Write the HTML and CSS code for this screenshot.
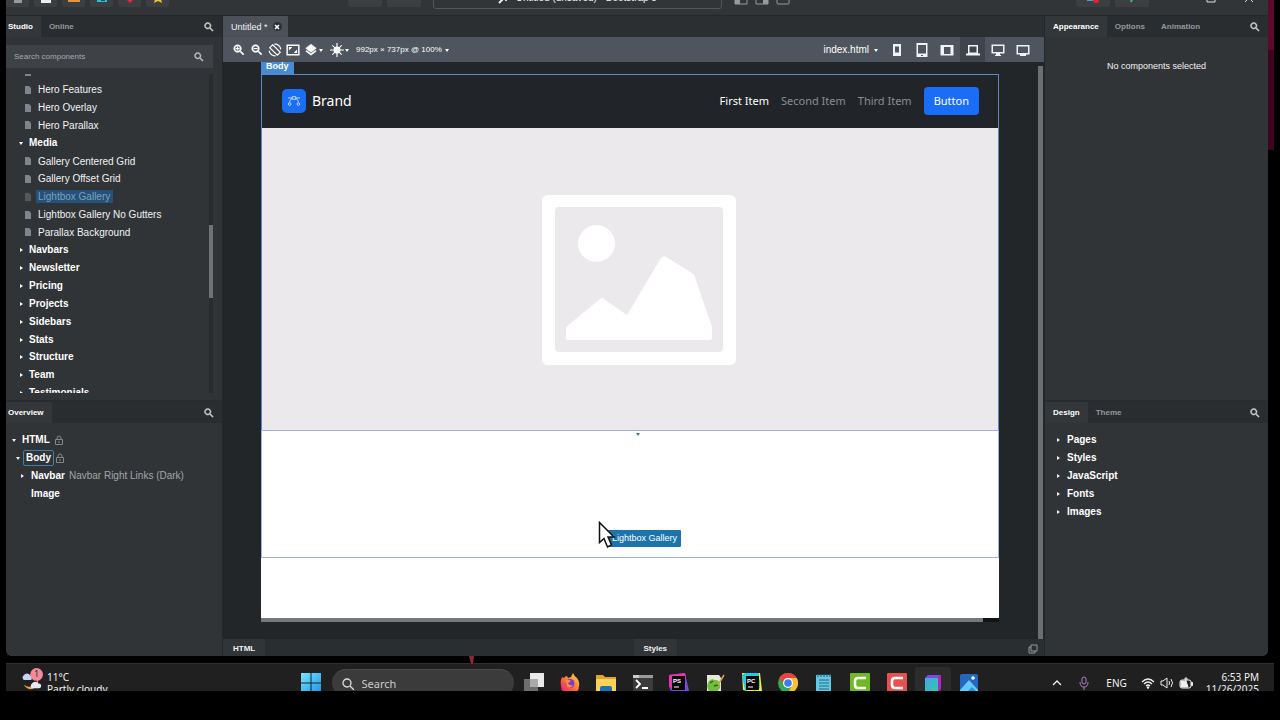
FILE: index.html
```html
<!DOCTYPE html>
<html lang="en">
<head>
<meta charset="utf-8">
<title>Untitled - Bootstrap Studio</title>
<link rel="stylesheet" href="styles.css">
</head>
<body>
<svg class="defs" aria-hidden="true">
  <symbol id="search" viewBox="0 0 24 24"><path d="M15.5 14h-.79l-.28-.27C15.41 12.59 16 11.11 16 9.5 16 5.91 13.09 3 9.5 3S3 5.91 3 9.5 5.91 16 9.5 16c1.61 0 3.09-.59 4.23-1.57l.27.28v.79l5 4.99L20.49 19l-4.99-5zm-6 0C7.01 14 5 11.99 5 9.5S7.01 5 9.5 5 14 7.01 14 9.5 11.99 14 9.5 14z" stroke="currentColor"/></symbol>
  <symbol id="file" viewBox="0 0 8 10"><path d="M1 1h4l2 2v6H1z"/></symbol>
  <symbol id="right" viewBox="0 0 6 6"><path d="M2 1l3 2-3 2z"/></symbol>
  <symbol id="down" viewBox="0 0 6 6"><path d="M1 2h4L3 5z"/></symbol>
  <symbol id="lock" viewBox="0 0 10 10"><path d="M1.5 4.5h7v5h-7zM3 4.500V3a2 2 0 0 1 4 0v1.500M5 6v2" fill="none" stroke="currentColor"/></symbol>
</svg>

<div class="desktop">
  <div class="screen">
    <div class="window">
      <header class="topbar">
        <div class="tools">
          <button class="tool" aria-label="Menu"><svg viewBox="0 0 12 12"><path d="M2 9h8v3H2z" fill="#999"/></svg></button>
          <button class="tool" aria-label="New"><svg viewBox="0 0 12 12"><path d="M1 1h10v11H1z" fill="#eee"/></svg></button>
          <button class="tool" aria-label="Open"><svg viewBox="0 0 12 12"><path d="M0 3h12v8H0z" fill="#e2953a"/></svg></button>
          <button class="tool" aria-label="Save"><svg viewBox="0 0 12 12"><path d="M1 1h10v10H1z" fill="#38b6d8"/><path d="M5 8h4v2H5z" fill="#24505e"/></svg></button>
          <button class="tool" aria-label="Favorite"><svg viewBox="0 0 12 12"><path d="M1 3h10v4l-5 5-5-5z" fill="#e0293f"/></svg></button>
          <button class="tool" aria-label="Rate"><svg viewBox="0 0 12 12"><path d="M6 0l2 4 4 1-3 3 1 4-4-2-4 2 1-4-3-3 4-1z" fill="#f0c22e"/></svg></button>
        </div>
        <span class="space-left"></span>
        <div class="history"><button class="tool" aria-label="Undo"></button><button class="tool" aria-label="Redo"></button></div>
        <div class="title"><svg viewBox="0 0 12 12"><path d="M1 11l4-4M5 5l3 3 3-5-2-2z" stroke="#eee" stroke-width="2" fill="#eee"/></svg>Untitled (unsaved) - Bootstrap 5</div>
        <div class="layouts">
          <svg viewBox="0 0 14 14"><path d="M1 1h12v12H1z" fill="none" stroke="#999"/><path d="M1 1h5v12H1z" fill="#999"/></svg>
          <svg viewBox="0 0 14 14"><path d="M1 1h12v12H1z" fill="none" stroke="#999"/><path d="M8 1h5v12H8z" fill="#999"/></svg>
          <svg viewBox="0 0 14 14"><rect x="1" y="1" width="12" height="12" rx="1" fill="none" stroke="#999"/></svg>
        </div>
        <span class="space-right"></span>
        <div class="history">
          <button class="tool" aria-label="Preview"><svg viewBox="0 0 12 12"><path d="M0 1h9v9H0z" fill="#38a6d8"/><circle cx="9" cy="9" r="3" fill="#e8202f"/></svg></button>
          <button class="tool" aria-label="Export"><svg viewBox="0 0 12 12"><path d="M8 0L4 6h3l-2 5" stroke="#2fc56a" stroke-width="2" fill="none"/></svg></button>
        </div>
        <div class="winctl">
          <svg viewBox="0 0 10 10"><path d="M0 5h8" stroke="#ddd"/></svg>
          <svg viewBox="0 0 10 10"><path d="M1 1h8v8H1z" stroke="#ddd" fill="none"/></svg>
          <svg viewBox="0 0 10 10"><path d="M1 1l8 8M9 1L1 9" stroke="#ddd"/></svg>
        </div>
      </header>

      <div class="workspace">
        <aside class="side left">
          <section class="panel components">
            <div class="tabs"><button class="tab on">Studio</button><button class="tab">Online</button><button class="find" aria-label="Search"><svg><use href="#search"/></svg></button></div>
            <label class="searchbox"><input type="text" placeholder="Search components" aria-label="Search components"><svg><use href="#search"/></svg></label>
            <div class="scrollarea">
              <div class="clip">
                <ul class="tree">
                  <li class="leaf"><svg><use href="#file"/></svg></li>
                  <li class="leaf"><svg><use href="#file"/></svg><span>Hero Features</span></li>
                  <li class="leaf"><svg><use href="#file"/></svg><span>Hero Overlay</span></li>
                  <li class="leaf"><svg><use href="#file"/></svg><span>Hero Parallax</span></li>
                  <li class="group"><svg><use href="#down"/></svg>Media</li>
                  <li class="leaf"><svg><use href="#file"/></svg><span>Gallery Centered Grid</span></li>
                  <li class="leaf"><svg><use href="#file"/></svg><span>Gallery Offset Grid</span></li>
                  <li class="leaf picked"><svg><use href="#file"/></svg><span>Lightbox Gallery</span></li>
                  <li class="leaf"><svg><use href="#file"/></svg><span>Lightbox Gallery No Gutters</span></li>
                  <li class="leaf"><svg><use href="#file"/></svg><span>Parallax Background</span></li>
                  <li class="group"><svg><use href="#right"/></svg>Navbars</li>
                  <li class="group"><svg><use href="#right"/></svg>Newsletter</li>
                  <li class="group"><svg><use href="#right"/></svg>Pricing</li>
                  <li class="group"><svg><use href="#right"/></svg>Projects</li>
                  <li class="group"><svg><use href="#right"/></svg>Sidebars</li>
                  <li class="group"><svg><use href="#right"/></svg>Stats</li>
                  <li class="group"><svg><use href="#right"/></svg>Structure</li>
                  <li class="group"><svg><use href="#right"/></svg>Team</li>
                  <li class="group"><svg><use href="#right"/></svg>Testimonials</li>
                </ul>
              </div>
              <div class="track"><div class="thumb"></div></div>
            </div>
          </section>
          <section class="panel overview">
            <div class="tabs"><button class="tab on">Overview</button><button class="find" aria-label="Search"><svg><use href="#search"/></svg></button></div>
            <ul class="outline">
              <li class="d0"><svg class="caret"><use href="#down"/></svg><b>HTML</b><svg class="lock"><use href="#lock"/></svg></li>
              <li class="d1"><svg class="caret"><use href="#down"/></svg><b class="boxed">Body</b><svg class="lock"><use href="#lock"/></svg></li>
              <li class="d2"><svg class="caret"><use href="#right"/></svg><b>Navbar</b><span>Navbar Right Links (Dark)</span></li>
              <li class="d2"><svg class="caret"></svg><b>Image</b></li>
            </ul>
          </section>
        </aside>

        <main class="center">
          <div class="doctabs"><div class="doctab">Untitled *<button aria-label="Close tab"><svg viewBox="0 0 8 8"><path d="M2 2l4 4M6 2L2 6" stroke="#fff" stroke-width="1.500"/></svg></button></div></div>
          <div class="toolbar">
            <button aria-label="Zoom in"><svg viewBox="0 0 24 24"><use href="#search"/><path d="M9.500 6v7M6 9.500h7" stroke="currentColor" stroke-width="2"/></svg></button>
            <button aria-label="Zoom out"><svg viewBox="0 0 24 24"><use href="#search"/><path d="M6 9.500h7" stroke="currentColor" stroke-width="2"/></svg></button>
            <button aria-label="Rotate"><svg viewBox="0 0 24 24"><g fill="none" stroke="currentColor" stroke-width="2"><path d="M8 3l13 13-5 5L3 8zM11 2a10 10 0 0 1 11 9M13 22A10 10 0 0 1 2 13"/></g></svg></button>
            <button aria-label="Fit"><svg viewBox="0 0 24 24"><path d="M2 4h20v16H2z" fill="none" stroke="currentColor" stroke-width="2.500"/><path d="M19 11v6h-6zM5 13V7h6z"/></svg></button>
            <button aria-label="Layers"><svg viewBox="0 0 24 24"><path d="M11.990 18.540l-7.370-5.730L3 14.070l9 7 9-7-1.630-1.270-7.380 5.740zM12 16l7.360-5.730L21 9l-9-7-9 7 1.630 1.270L12 16z" stroke="currentColor"/></svg><svg class="caret"><use href="#down"/></svg></button>
            <button class="sun" aria-label="Brightness"><svg viewBox="0 0 24 24"><circle cx="12" cy="12" r="6"/><path d="M12 0v24M0 12h24M4 4l16 16M20 4L4 20" stroke="currentColor" stroke-width="2"/></svg><svg class="caret"><use href="#down"/></svg></button>
            <button class="size">992px × 737px @ 100%<svg class="caret"><use href="#down"/></svg></button>
            <button class="page">index.html<svg class="caret"><use href="#down"/></svg></button>
            <div class="devices">
              <button aria-label="Phone"><svg viewBox="0 0 14 14"><path d="M3 1h8v12H3z"/><path class="hole" d="M5 3.500h4v6H5z"/></svg></button>
              <button aria-label="Tablet"><svg viewBox="0 0 14 14"><path d="M1.500 0h11v14h-11z"/><path class="hole" d="M3 2h8v8.500H3zM6 12h2v1H6z"/></svg></button>
              <button aria-label="Tablet landscape"><svg viewBox="0 0 14 14"><path d="M.5 2h13v10.500H.5z"/><path class="hole" d="M4 4h6.500v7H4z"/></svg></button>
              <button class="on" aria-label="Laptop"><svg viewBox="0 0 14 14"><path d="M2 2h10v8.500h2v2H0v-2h2z"/><path class="hole" d="M3.500 3.500h7v6h-7z"/></svg></button>
              <button aria-label="Desktop"><svg viewBox="0 0 14 14"><path d="M.5 1.500h13v9H9V12h1v1H4v-1h1v-1.500H.5z"/><path class="hole" d="M2 3h10v6H2z"/></svg></button>
              <button aria-label="Large desktop"><svg viewBox="0 0 14 14"><path d="M.5 2h13v9.500H10V13H4v-1.500H.5z"/><path class="hole" d="M2 3.500h10V10H2z"/></svg></button>
            </div>
          </div>

          <div class="canvas">
            <div class="artboard">
              <div class="tagrow"><span class="tag">Body</span></div>
              <div class="selected">
                <nav class="navbar">
                  <span class="logo"><svg viewBox="0 0 16 16"><g fill="none" stroke="#cfe2ff"><path d="M1 4.500h5M10 4.500h5M6 3h4v3H6zM6 5C4 6 3 8 3 10M10 5c2 1 3 3 3 5"/><circle cx="3" cy="11.500" r="1.500"/><circle cx="13" cy="11.500" r="1.500"/></g></svg></span>
                  <span class="brand">Brand</span>
                  <a class="active" href="#">First Item</a><a href="#">Second Item</a><a href="#">Third Item</a>
                  <button>Button</button>
                </nav>
                <div class="image">
                  <svg viewBox="0 0 194 170" role="img" aria-label="Image placeholder"><path fill="#fff" fill-rule="evenodd" d="M6 0h182q6 0 6 6v158q0 6-6 6H6q-6 0-6-6V6q0-6 6-6zM17 12q-4 0-4 4v137q0 4 4 4h160q4 0 4-4V16q0-4-4-4z"/><circle cx="54.500" cy="48.500" r="18.500" fill="#fff"/><path fill="#fff" d="M24 132l34-28q2-2 4 0l23 16 34-57q2-3 5-1l26 16q2 1 3 4l17 50v11q0 2-2 2H26q-2 0-2-2z"/></svg>
                </div>
                <div class="dropzone">
                  <svg class="marker"><use href="#down"/></svg>
                  <span class="drag">Lightbox Gallery</span>
                  <svg class="cursor" viewBox="0 0 18 28"><path d="M1.500 1.500v20l4.500-4 3.500 8.500 4-2-3.500-8h6z" fill="#fff" stroke="#111" stroke-width="1.500"/></svg>
                </div>
              </div>
              <div class="blank"></div>
              <div class="hscroll"><div></div></div>
            </div>
            <div class="vscroll"></div>
          </div>
          <div class="bottombar">
            <div><button>HTML</button></div>
            <div><button>Styles</button><button class="pop" aria-label="Detach"><svg viewBox="0 0 10 10"><path d="M3 1h6v6H3zM3 3H1v6h6V7" fill="none" stroke="#999"/></svg></button></div>
          </div>
        </main>

        <aside class="side right">
          <section class="panel appearance">
            <div class="tabs"><button class="tab on">Appearance</button><button class="tab">Options</button><button class="tab">Animation</button><button class="find" aria-label="Search"><svg><use href="#search"/></svg></button></div>
            <p>No components selected</p>
          </section>
          <section class="panel design">
            <div class="tabs"><button class="tab on">Design</button><button class="tab">Theme</button><button class="find" aria-label="Search"><svg><use href="#search"/></svg></button></div>
            <ul class="outline">
              <li><svg class="caret"><use href="#right"/></svg><b>Pages</b></li>
              <li><svg class="caret"><use href="#right"/></svg><b>Styles</b></li>
              <li><svg class="caret"><use href="#right"/></svg><b>JavaScript</b></li>
              <li><svg class="caret"><use href="#right"/></svg><b>Fonts</b></li>
              <li><svg class="caret"><use href="#right"/></svg><b>Images</b></li>
            </ul>
          </section>
        </aside>
      </div>
    </div>
    <div class="wallpaper"></div>
    <svg class="speck" viewBox="0 0 6 8"><path d="M0 0h5L4 8H2z" fill="#8c2740"/></svg>
  </div>

  <footer class="taskbar">
    <div class="taskrow">
      <div class="weather">
        <svg viewBox="0 0 24 24"><path d="M3 18a8 8 0 0 0 15-6 9 9 0 0 1-15 6z" fill="#f0a33c"/><path d="M3 13a3 3 0 0 1 0-5 4 4 0 0 1 7 0 3 3 0 0 1 1 5z" fill="#c8d4f2"/><path d="M12 22a3 3 0 0 1 0-5 4 4 0 0 1 7 0 2.500 2.500 0 0 1 1 5z" fill="#e4e9f8"/><circle cx="17" cy="7" r="7" fill="#f08a9c"/><text x="17" y="10" text-anchor="middle">1</text></svg>
        <div>11°C<br>Partly cloudy</div>
      </div>
      <button class="start" aria-label="Start"><svg viewBox="0 0 20 20"><defs><linearGradient id="win" x2="1" y2="1"><stop stop-color="#7ae4ff"/><stop offset="1" stop-color="#1a95e8"/></linearGradient></defs><path d="M0 0h9.500v9.500H0zM10.500 0H20v9.500h-9.500zM0 10.500h9.500V20H0zM10.500 10.500H20V20h-9.500z" fill="url(#win)"/></svg></button>
      <label class="tasksearch"><svg viewBox="0 0 12 12"><circle cx="5" cy="5" r="4" fill="none" stroke="#ddd" stroke-width="1.300"/><path d="M8 8l4 4" stroke="#ddd" stroke-width="1.300"/></svg><input type="text" placeholder="Search" aria-label="Search"></label>
      <div class="apps">
        <button aria-label="Task view"><svg viewBox="0 0 20 20"><path d="M0 6h14v12H0z" fill="#6e6e6e"/><path d="M6 0h14v14H6z" fill="#e8e8e8"/><path d="M6 6h8v8H6z" fill="#aaa"/></svg></button>
        <button aria-label="Firefox"><svg viewBox="0 0 20 20"><defs><linearGradient id="fox" x1="1" x2=".2" y2="1"><stop stop-color="#ffe04a"/><stop offset=".5" stop-color="#ff7a2d"/><stop offset="1" stop-color="#e8197d"/></linearGradient></defs><path d="M2 4l2 1q1-2 3-2l1 2 3-1q1-2 2-4 1 3 4 5 3 4 2 8a9 9 0 0 1-18 0Q0 8 2 4z" fill="url(#fox)"/><circle cx="10" cy="10.500" r="4.500" fill="#7b3bd2"/><path d="M5 7q4-1 6 1l-3 2q1 3 5 2-2 4-6 2z" fill="#ff8a35"/></svg></button>
        <button aria-label="Files"><svg viewBox="0 0 20 20"><path d="M0 2h7l2 2h11v15H0z" fill="#e0a52b"/><path d="M0 6h20v13H0z" fill="#fbd358"/><path d="M4 15q0-2 2-2h8q2 0 2 2v4H4z" fill="#1b73b5"/></svg></button>
        <button aria-label="Terminal"><svg viewBox="0 0 20 20"><path d="M0 2h20v16H0z" fill="#3b3b3b"/><path d="M0 2h20v3H0z" fill="#999"/><path d="M0 2h6v3H0z" fill="#ccc"/><path d="M3 7l4 4-4 4M9 15h6" fill="none" stroke="#fff" stroke-width="1.800"/></svg></button>
        <button aria-label="PhpStorm"><svg viewBox="0 0 20 20"><path d="M0 2L16 0l4 18-12 2-7-3z" fill="#7b45e8"/><path d="M0 2L16 0l1 5-13 11-4-2z" fill="#f032a8"/><path d="M3 3h13v14H3z" fill="#080808"/><text x="4" y="10">PS</text><path d="M5 14h5" stroke="#fff"/></svg></button>
        <button aria-label="Notepad++"><svg viewBox="0 0 20 20"><path d="M2 2h12l2 3v15H2z" fill="#e5e9df"/><path d="M2 13q2-9 8-6 6 0 5 8l-4 5-7-1z" fill="#72bd3a"/><path d="M5 10l3-2M9 13l4-1" stroke="#2f601b" stroke-width="1.500"/><path d="M19 2l-6 10" stroke="#d5a34a" stroke-width="1.500"/></svg></button>
        <button aria-label="PyCharm"><svg viewBox="0 0 20 20"><path d="M0 0h18l2 18-8 2-11-3z" fill="#f3ef3f"/><path d="M0 2l3-2h14v14L3 18z" fill="#25cbe2"/><path d="M16 5l2 2v8l-6 3z" fill="#39da89"/><path d="M4 3h13v14H4z" fill="#080808"/><text x="5" y="10">PC</text><path d="M6 14h5" stroke="#fff"/></svg></button>
        <button aria-label="Chrome"><svg viewBox="0 0 20 20"><circle cx="10" cy="10" r="10" fill="#34a853"/><path d="M1.300 5A10 10 0 0 1 18.700 5H10L6 12z" fill="#e8453c"/><path d="M18.700 5A10 10 0 0 1 10 20l4-8-4-7z" fill="#fbc02d"/><circle cx="10" cy="10" r="5" fill="#fff"/><circle cx="10" cy="10" r="3.800" fill="#3b7ded"/></svg></button>
        <button aria-label="Notepad"><svg viewBox="0 0 20 20"><path d="M2 2h15v18H2z" fill="#65c9e2"/><path d="M4 1v3M7 1v3M10 1v3M13 1v3M16 1v3M5 7h10M5 10h10M5 13h10M5 16h10" stroke="#206b88" stroke-width="1.200"/></svg></button>
        <button aria-label="Camtasia"><svg viewBox="0 0 20 20"><rect width="20" height="20" rx="1" fill="#6fba22"/><path d="M16 5H8q-3 0-3 3v4q0 3 3 3h8" fill="none" stroke="#fff" stroke-width="2.500"/></svg></button>
        <button aria-label="Camtasia Recorder"><svg viewBox="0 0 20 20"><rect width="20" height="20" rx="1" fill="#e6504f"/><path d="M16 5H8q-3 0-3 3v4q0 3 3 3h8" fill="none" stroke="#fff" stroke-width="2.500"/></svg></button>
        <button class="running" aria-label="Bootstrap Studio"><svg viewBox="0 0 20 20"><defs><linearGradient id="bss" x2="1" y2="1"><stop stop-color="#42a5ec"/><stop offset="1" stop-color="#35c9a0"/></linearGradient></defs><path d="M2 5l3-3h13l-3 3z" fill="#7b4be0"/><path d="M15 5l3-3v14l-3 3z" fill="#b326c4"/><path d="M2 5h13v15H2z" fill="url(#bss)"/></svg></button>
        <button aria-label="Photos"><svg viewBox="0 0 20 20"><rect x="1" y="1" width="18" height="18" rx="2" fill="#2467bf"/><path d="M1 17l9-10 9 10v2H1z" fill="#65c8fa"/><path d="M7 20l6-6 6 6z" fill="#2993e0"/><circle cx="14" cy="5" r="1.800" fill="#fff"/></svg></button>
      </div>
      <div class="tray">
        <svg viewBox="0 0 12 12"><path d="M2 8l4-4 4 4" fill="none" stroke="#eee" stroke-width="1.300"/></svg>
        <svg class="mic" viewBox="0 0 12 14"><rect x="4" y="1" width="4" height="7" rx="2" fill="none" stroke="#b07cc6"/><path d="M2 6q0 5 4 5t4-5M6 11v3" fill="none" stroke="#b07cc6"/></svg>
        <span>ENG</span>
        <div class="status">
          <svg viewBox="0 0 14 14"><g fill="none" stroke="#eee" stroke-width="1.200"><path d="M1 6q6-6 12 0M3 8q4-4 8 0M5 10q2-2 4 0"/></g><circle cx="7" cy="11.500" r="1.200" fill="#eee"/></svg>
          <svg viewBox="0 0 14 14"><path d="M1 5h2l4-3v10L3 9H1zM9 5q1 2 0 4M11 3q3 4 0 8" fill="none" stroke="#eee"/></svg>
          <svg viewBox="0 0 14 14"><rect x="1" y="4" width="11" height="8" rx="2" fill="none" stroke="#eee"/><path d="M2 5h5l2 6H2zM12.500 6.500h1v3h-1zM7 1v4M5 3h4" fill="#eee" stroke="#eee"/></svg>
        </div>
        <time>6:53 PM<br>11/26/2025</time>
      </div>
    </div>
  </footer>
</div>
</body>
</html>
```

FILE: styles.css
```css
* { box-sizing: border-box; }
body { margin: 0; background: #000; color: #f2f2f2; font: 10px/18px "Liberation Sans", Arial, sans-serif; }
button { margin: 0; padding: 0; border: 0; background: none; color: inherit; font: inherit; display: flex; align-items: center; justify-content: center; }
ul { margin: 0; padding: 0; list-style: none; }
svg { display: block; flex: none; fill: currentColor; }
.defs { position: absolute; width: 0; height: 0; }
.caret { width: 6px; height: 6px; }

.desktop { height: 100vh; display: flex; flex-direction: column; padding: 0 6px 29px; overflow: hidden; }
.screen { position: relative; flex: 1; min-height: 0; display: flex; }
.window { flex: 1; min-width: 0; display: flex; flex-direction: column; background: #232729; border-radius: 0 0 6px 6px; overflow: hidden; }
.wallpaper { width: 6px; background: linear-gradient(#5a0a2c 0 50px, #3c0620 50px 150px, #000 150px); }
.speck { position: absolute; left: 36.5%; top: 100%; width: 6px; height: 8px; z-index: 1; }

/* Title bar */
.topbar { height: 16px; padding-bottom: 8px; display: flex; align-items: flex-end; background: #323537; border-bottom: 1px solid #25282a; overflow: hidden; }
.tools, .history, .layouts, .winctl { display: flex; align-items: flex-end; gap: 5px; }
.tool { width: 23px; height: 24px; background: #3c3e42; border-radius: 3px; padding-bottom: 4px; align-items: flex-end; }
.tool svg { width: 12px; height: 12px; }
.history .tool { width: 34px; }
.space-left { flex: 5; }
.space-right { flex: 8; }
.title { flex: none; width: 289px; height: 24px; margin: 0 12px -2px; padding-bottom: 1px; display: flex; align-items: flex-end; justify-content: center; gap: 6px; border: 1px solid #53565a; border-radius: 3px; }
.title svg { width: 12px; height: 12px; margin-bottom: 3px; }
.layouts { gap: 7px; margin-bottom: 2px; }
.layouts svg { width: 14px; height: 14px; }
.winctl { gap: 28px; margin: 0 14px 4px 19px; }
.winctl svg { width: 10px; height: 10px; }

/* Side panels */
.workspace { flex: 1; min-height: 0; display: grid; grid-template-columns: 216px 1fr 223px; column-gap: 1px; }
.side { min-height: 0; display: flex; flex-direction: column; gap: 2px; background: #292c2f; }
.panel { background: #313437; display: flex; flex-direction: column; min-height: 0; }
.components, .appearance { flex: 1; }
.overview, .design { height: 254px; }
.tabs { display: flex; height: 21px; background: #2a2d30; font-size: 8px; flex: none; }
.tab { padding: 0 8px; color: #96989a; font-weight: bold; }
.tab.on { color: #fff; background: #34373a; }
.left .tab.on { padding-left: 2px; }
.find { margin-left: auto; width: 26px; color: #d0d0d0; }
.find svg, .searchbox svg { width: 12px; height: 12px; }
.searchbox { flex: none; display: flex; align-items: center; height: 23px; margin: 8px 9px 0 0; padding: 0 8px; background: #3e4145; color: #c0c0c0; }
.searchbox input { flex: 1; min-width: 0; padding: 0; border: 0; background: none; color: #fff; font: 8px "Liberation Sans", Arial, sans-serif; }
input::placeholder { color: #a8abae; opacity: 1; }
.scrollarea { flex: 1; min-height: 0; display: flex; margin: 6px 9px 7px 0; }
.clip { flex: 1; overflow: hidden; }
.tree { height: 339px; margin-top: -11px; display: grid; grid-auto-rows: 1fr; }
.tree li { display: flex; align-items: center; min-height: 0; }
.leaf { padding-left: 18px; gap: 4px; }
.leaf svg { width: 8px; height: 10px; color: #7e858c; }
.leaf span { padding: 0 3px 0 2px; line-height: 13px; }
.picked span { background: #24527a; color: #7fa0b8; }
.picked svg { color: #53585c; }
.group { padding-left: 12px; gap: 5px; font-weight: bold; color: #fff; }
.group svg { width: 6px; height: 6px; }
.track { width: 4px; background: #292c2f; padding-top: 151px; }
.thumb { height: 73px; background: #707376; }
.outline { padding-top: 8px; }
.outline li { display: flex; align-items: center; height: 18px; padding-left: 10px; }
.outline b { color: #fff; margin-left: 6px; }
.outline span { color: #a3a5a7; margin-left: 4px; }
.outline .d0 { padding-left: 5px; }
.outline .d0 b { margin-left: 5px; }
.outline .d1 { padding-left: 9px; }
.outline .d2 { padding-left: 13px; }
.outline .boxed { margin-left: 2px; padding: 0 2px; line-height: 14px; border: 1px solid #467ba3; border-radius: 2px; }
.lock { width: 10px; height: 10px; margin-left: 4px; color: #85888b; }
.boxed + .lock { margin-left: 1px; }
.appearance p { margin: 20px 0 0; text-align: center; font-size: 9px; }

/* Editor */
.center { min-width: 0; display: flex; flex-direction: column; background: #222628; }
.doctabs { height: 21px; background: #2c2f32; display: flex; }
.doctab { display: flex; align-items: center; gap: 5px; padding: 0 6px 0 8px; background: #4b5059; font-size: 9px; }
.doctab button { width: 9px; height: 9px; border-radius: 50%; background: #2c2f35; }
.doctab svg { width: 8px; height: 8px; }
.toolbar { height: 25px; flex: none; display: flex; align-items: center; gap: 4px; padding: 0 8px 0 9px; background: #4f555e; color: #fff; }
.toolbar > button > svg:first-child { width: 14px; height: 14px; }
.toolbar .sun { margin-left: 2px; }
.toolbar .size { margin-left: 2px; font-size: 8px; }
.toolbar .size .caret, .toolbar .page .caret { width: 6px; height: 6px; margin-left: 2px; }
.toolbar .page { margin-left: auto; }
.toolbar .page .caret { margin-left: 4px; }
.devices { width: 152px; margin-left: 1px; display: flex; align-self: stretch; }
.devices button { flex: 1; color: #f0f2f8; }
.devices button.on { background: #3f434b; }
.devices svg { width: 14px; height: 14px; }
.hole { fill: #4f555e; }
.on .hole { fill: #3f434b; }

.canvas { flex: 1; min-height: 0; display: flex; padding: 0 1px 0 38px; }
.artboard { flex: 1; display: flex; flex-direction: column; margin: 0 39px 17px 0; }
.tagrow { height: 12px; display: flex; overflow: hidden; }
.tag { padding: 0 5px; height: 12px; line-height: 9px; background: #468bd4; color: #fff; font-size: 9px; font-weight: bold; }
.selected { outline: 1px solid #5d88c8; outline-offset: -1px; }
.navbar { height: 54px; display: flex; align-items: center; gap: 12px; padding: 0 19px 1px 21px; background: #212529; border: 1px solid #4a6c99; border-bottom: 0; font: 11px/16px "Noto Sans", "Open Sans", sans-serif; }
.logo { width: 24px; height: 24px; display: grid; place-items: center; border-radius: 5px; background: #196ef5; margin-left: -1px; }
.logo svg { width: 14px; height: 14px; }
.brand { margin: 0 auto 0 -6px; font-size: 14px; color: #fff; }
.navbar a { color: #8b8d90; text-decoration: none; }
.navbar a.active { color: #fff; }
.navbar button { height: 28px; padding: 0 10px; border-radius: 4px; background: #1a6df6; color: #fff; }
.image { height: 302px; display: grid; place-items: center; padding: 2px 0 0 16px; background: #ebe9eb; border: solid #86a6d6; border-width: 0 0 0 1px; }
.image svg { width: 194px; height: 170px; }
.dropzone { position: relative; height: 128px; background: #fff; border: 1px solid #9fb4dc; }
.marker { position: absolute; left: 51%; top: 0; margin-left: -2px; width: 6px; height: 6px; color: #4672b0; }
.drag { position: absolute; left: 47%; top: 99px; padding: 0 4px; line-height: 17px; background: #1c74ac; color: #fff; font-size: 9px; border-radius: 1px; }
.cursor { position: absolute; left: 336px; top: 90px; width: 18px; height: 28px; }
.blank { flex: 1; background: #fff; }
.hscroll { height: 4px; background: #111315; padding-right: 16px; }
.hscroll div { height: 4px; background: #75797d; }
.vscroll { width: 5px; margin: 4px 0 0; background: #6c6f72; }
.bottombar { height: 17px; display: grid; grid-template-columns: 1fr 1fr; background: #292e31; font-size: 8px; font-weight: bold; }
.bottombar div { display: flex; justify-content: space-between; }
.bottombar button { padding: 1px 10px 0; background: #323538; }
.bottombar .pop { padding: 0 6px; background: none; }
.pop svg { width: 10px; height: 10px; }

/* Taskbar: the lower part of the row is cut off by the screen edge */
.taskbar { height: 28px; margin-top: 7px; background: #202020; border-top: 1px solid #303030; overflow: hidden; font: 10px/12px "Noto Sans", "Open Sans", sans-serif; }
.taskrow { height: 38px; display: flex; align-items: center; padding: 0 15px; }
.weather { flex: 1; display: flex; align-items: center; gap: 4px; margin-right: 8px; }
.weather svg { width: 22px; height: 22px; margin-bottom: 8px; }
.weather text { fill: #43141c; font-size: 9px; }
.start svg { width: 20px; height: 20px; }
.tasksearch { width: 182px; height: 28px; margin: 0 2px 0 11px; padding: 0 10px; display: flex; align-items: center; gap: 8px; background: #3b3b3b; border-top: 1px solid #4a4a4a; border-radius: 14px; }
.tasksearch svg { width: 12px; height: 12px; }
.tasksearch input { flex: 1; min-width: 0; padding: 0; border: 0; background: none; color: #fff; font: 11px "Noto Sans", "Open Sans", sans-serif; }
.tasksearch input::placeholder { color: #ccc; }
.apps { width: 472px; display: flex; }
.apps button { flex: 1; height: 32px; }
.apps svg { width: 20px; height: 20px; }
.apps text { font: bold 6px "Liberation Sans", Arial, sans-serif; fill: #fff; }
.apps .running { background: #2c2c2c; border-radius: 3px; }
.tray { flex: 1; display: flex; align-items: center; justify-content: flex-end; }
.tray > svg { width: 12px; height: 12px; margin-right: 15px; }
.tray > .mic { height: 14px; margin-right: 16px; }
.status { display: flex; gap: 5px; margin: 0 13px 0 14px; }
.status svg { width: 14px; height: 14px; }
time { text-align: right; }
```
